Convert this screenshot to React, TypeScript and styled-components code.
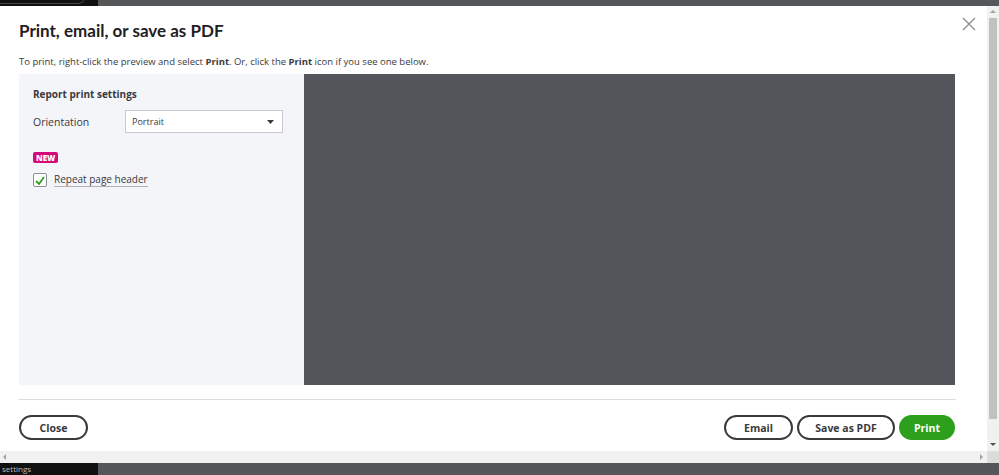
import React from 'react'
import styled, { createGlobalStyle } from 'styled-components'

const GlobalStyle = createGlobalStyle`
  html, body {
    margin: 0;
    padding: 0;
    overflow: hidden;
    background: #555;
  }
  * {
    box-sizing: border-box;
  }
`

const Page = styled(`div`)`
  width: 999px;
  height: 475px;
  display: flex;
  flex-direction: column;
  font-family: 'Open Sans', 'Noto Sans', sans-serif;
  color: #393a3d;
`

const Strip = styled(`div`)<{ $h: number }>`
  height: ${props => props.$h}px;
  display: flex;
  flex-shrink: 0;
`

const StripDark = styled(`div`)`
  width: 98px;
  background: #101010;
  position: relative;
  overflow: hidden;
  font-size: 8px;
  color: #bbb;
  padding-left: 2px;
  line-height: 12px;
`

const StripGray = styled(`div`)`
  flex: 1;
  background: #555658;
`

const TopCurve = styled(`div`)`
  position: absolute;
  left: -20px;
  top: -20px;
  width: 106px;
  height: 24px;
  border: 1px solid #4a4a4a;
  border-radius: 8px;
`

const Middle = styled(`div`)`
  display: flex;
  height: 445px;
  flex-shrink: 0;
`

const Modal = styled(`div`)`
  flex: 1;
  background: #fff;
  display: flex;
  flex-direction: column;
  padding: 0 31px 0 19px;
  position: relative;
`

const CloseX = styled(`button`)`
  position: absolute;
  top: 9px;
  right: 9px;
  width: 18px;
  height: 18px;
  padding: 0;
  border: none;
  background: none;
  display: flex;
  align-items: center;
  justify-content: center;
`

const Title = styled(`h1`)`
  margin: 13px 0 0;
  font-family: Lato, 'Open Sans', sans-serif;
  font-size: 17px;
  font-weight: 700;
  line-height: 24px;
  color: #1f2023;
`

const Hint = styled(`p`)`
  margin: 12px 0 0;
  font-size: 9.5px;
  line-height: 14px;
  b {
    font-weight: 700;
  }
`

const Content = styled(`div`)`
  display: flex;
  margin-top: 5px;
  margin-right: 1px;
  height: 311px;
`

const Settings = styled(`div`)`
  width: 285px;
  background: #f4f5f8;
  padding: 13px 14px;
  display: flex;
  flex-direction: column;
`

const SettingsTitle = styled(`div`)`
  font-size: 10px;
  font-weight: 700;
  line-height: 14px;
`

const FieldRow = styled(`div`)`
  display: flex;
  align-items: center;
  margin-top: 9px;
`

const FieldLabel = styled(`span`)`
  width: 92px;
  font-size: 10.5px;
`

const Select = styled(`div`)`
  width: 158px;
  height: 23px;
  background: #fff;
  border: 1px solid #c8c9cc;
  display: flex;
  align-items: center;
  justify-content: space-between;
  padding: 0 8px 0 6px;
  font-size: 9px;
`

const Badge = styled(`span`)`
  align-self: flex-start;
  margin-top: 19px;
  background: #d4097b;
  color: #fff;
  font-size: 8px;
  font-weight: 800;
  line-height: 11px;
  padding: 0 3px;
  border-radius: 2px;
`

const CheckRow = styled(`label`)`
  display: flex;
  align-items: center;
  gap: 7px;
  margin-top: 10px;
`

const CheckBox = styled(`span`)`
  width: 14px;
  height: 14px;
  border: 1px solid #8d9096;
  border-radius: 2px;
  background: #fff;
  display: flex;
  align-items: center;
  justify-content: center;
`

const CheckLabel = styled(`span`)`
  font-size: 10px;
  line-height: 13px;
  border-bottom: 1px solid #b0b2b6;
`

const Preview = styled(`div`)`
  flex: 1;
  background: #53565a;
`

const Divider = styled(`hr`)`
  margin: 14px 0 0;
  border: none;
  border-top: 1px solid #dcdde0;
`

const Footer = styled(`div`)`
  display: flex;
  align-items: center;
  margin-top: 15px;
  padding-right: 1px;
  gap: 4px;
`

const Spacer = styled(`div`)`
  flex: 1;
`

const Button = styled(`button`)<{ $primary?: boolean; $w: number }>`
  width: ${props => props.$w}px;
  height: 25px;
  border-radius: 13px;
  font-family: inherit;
  font-size: 10.5px;
  font-weight: 700;
  padding: 0;
  border: 2px solid ${props => (props.$primary ? '#2ca01c' : '#393a3d')};
  background: ${props => (props.$primary ? '#2ca01c' : '#fff')};
  color: ${props => (props.$primary ? '#fff' : '#393a3d')};
`

const VScroll = styled(`div`)`
  width: 12px;
  background: #f1f1f1;
  display: flex;
  flex-direction: column;
  align-items: center;
`

const Arrow = styled(`div`)`
  height: 12px;
  display: flex;
  align-items: center;
  justify-content: center;
`

const Thumb = styled(`div`)`
  width: 8px;
  flex: 1;
  background: #c1c1c1;
  margin: 0 0 20px;
`

const HScroll = styled(`div`)`
  flex: 1;
  background: #f1f1f1;
  display: flex;
  align-items: center;
  justify-content: space-between;
  padding: 0 2px;
`

const Corner = styled(`div`)`
  width: 12px;
  background: #dcdcdc;
`

const Tri = ({ dir }: { dir: 'up' | 'down' | 'left' | 'right' }) => {
  const pts = {
    up: '0,4 3,1 6,4',
    down: '0,1 6,1 3,4',
    left: '4,0 4,6 1,3',
    right: '1,0 1,6 4,3',
  }[dir]
  return (
    <svg width="6" height="6" viewBox="0 0 6 6">
      <polygon points={pts} fill={dir === 'down' ? '#505050' : '#a3a3a3'} />
    </svg>
  )
}

function App() {
  return (
    <Page>
      <GlobalStyle />
      <Strip $h={6}>
        <StripDark>
          <TopCurve />
        </StripDark>
        <StripGray />
      </Strip>
      <Middle>
        <Modal>
          <CloseX aria-label="Close">
            <svg width="14" height="14" viewBox="0 0 14 14">
              <path d="M1 1 L13 13 M13 1 L1 13" stroke="#8d9096" strokeWidth="1.4" />
            </svg>
          </CloseX>
          <Title>Print, email, or save as PDF</Title>
          <Hint>
            To print, right-click the preview and select <b>Print</b>. Or, click the <b>Print</b> icon if you
            see one below.
          </Hint>
          <Content>
            <Settings>
              <SettingsTitle>Report print settings</SettingsTitle>
              <FieldRow>
                <FieldLabel>Orientation</FieldLabel>
                <Select>
                  <span>Portrait</span>
                  <svg width="7" height="4" viewBox="0 0 7 4">
                    <polygon points="0,0 7,0 3.5,4" fill="#393a3d" />
                  </svg>
                </Select>
              </FieldRow>
              <Badge>NEW</Badge>
              <CheckRow>
                <CheckBox>
                  <svg width="10" height="9" viewBox="0 0 10 9">
                    <path d="M1 5 L4 8 L9 1" stroke="#2ca01c" strokeWidth="1.8" fill="none" />
                  </svg>
                </CheckBox>
                <CheckLabel>Repeat page header</CheckLabel>
              </CheckRow>
            </Settings>
            <Preview />
          </Content>
          <Divider />
          <Footer>
            <Button $w={69}>Close</Button>
            <Spacer />
            <Button $w={69}>Email</Button>
            <Button $w={98}>Save as PDF</Button>
            <Button $w={56} $primary>
              Print
            </Button>
          </Footer>
        </Modal>
        <VScroll>
          <Arrow>
            <Tri dir="up" />
          </Arrow>
          <Thumb />
          <Arrow>
            <Tri dir="down" />
          </Arrow>
        </VScroll>
      </Middle>
      <Strip $h={12}>
        <HScroll>
          <Tri dir="left" />
          <Tri dir="right" />
        </HScroll>
        <Corner />
      </Strip>
      <Strip $h={12}>
        <StripDark>settings</StripDark>
        <StripGray />
      </Strip>
    </Page>
  )
}

export default App
